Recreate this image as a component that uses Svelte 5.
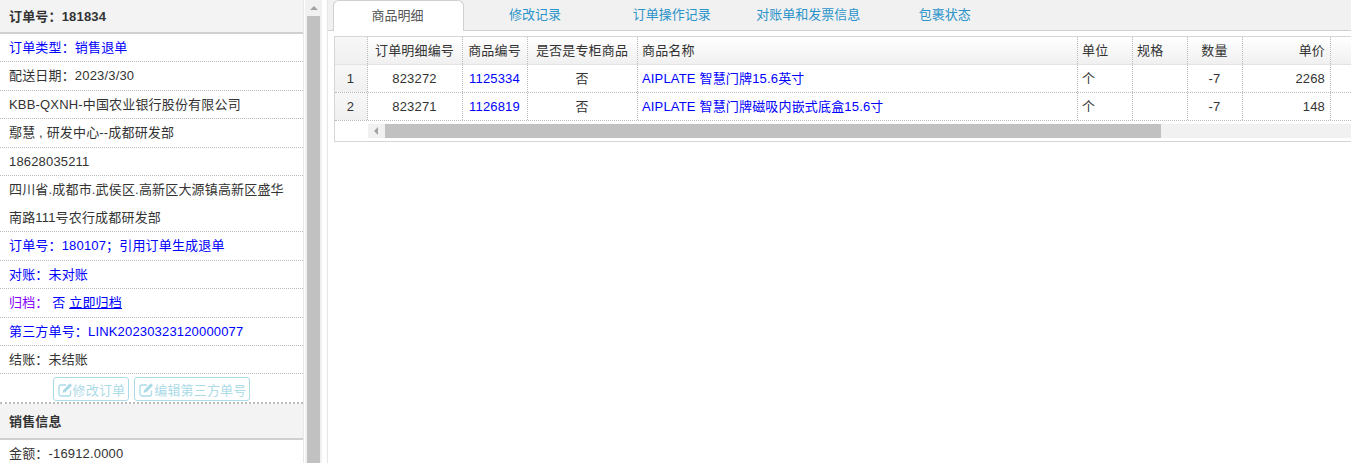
<script>
  // left panel rows
  const rows = [
    { text: "订单类型：销售退单", cls: "blue" },
    { text: "配送日期：2023/3/30" },
    { text: "KBB-QXNH-中国农业银行股份有限公司" },
    { text: "鄢慧 , 研发中心--成都研发部" },
    { text: "18628035211" },
    { text: "四川省.成都市.武侯区.高新区大源镇高新区盛华南路111号农行成都研发部" },
    { text: "订单号：180107；引用订单生成退单", cls: "blue" },
    { text: "对账：未对账", cls: "blue" },
    { text: "", cls: "purple", archive: true },
    { text: "第三方单号：LINK20230323120000077", cls: "blue" },
    { text: "结账：未结账" },
  ];

  const tabs = ["商品明细", "修改记录", "订单操作记录", "对账单和发票信息", "包裹状态"];

  const items = [
    { no: 1, id: "823272", code: "1125334", name: "AIPLATE 智慧门牌15.6英寸", qty: -7, price: 2268 },
    { no: 2, id: "823271", code: "1126819", name: "AIPLATE 智慧门牌磁吸内嵌式底盒15.6寸", qty: -7, price: 148 },
  ];
</script>

{#snippet editIcon()}
  <svg class="icon" viewBox="0 0 15 15" width="15" height="15" fill="none" stroke="currentColor">
    <path d="M12.500 8.500v3.500a2 2 0 0 1-2 2H3a2 2 0 0 1-2-2V5a2 2 0 0 1 2-2h5" stroke-width="1.300" />
    <path d="M4.500 10.800l.7-2.800L11.800 1.200l2.300 2.300-6.700 6.700z" fill="currentColor" stroke="none" />
  </svg>
{/snippet}

<div class="page">
  <aside class="left">
    <div class="panel">
      <div class="title first">订单号：181834</div>
      {#each rows as row}
        <div class="row {row.cls || ''}">
          {#if row.archive}
            归档：<span class="blue">&nbsp;否 <u>立即归档</u></span>
          {:else}
            {row.text}
          {/if}
        </div>
      {/each}
      <div class="actions">
        <button>{@render editIcon()}修改订单</button>
        <button>{@render editIcon()}编辑第三方单号</button>
      </div>
      <div class="title">销售信息</div>
      <div class="row">金额：-16912.0000</div>
    </div>
    <div class="vscroll">
      <span class="arrow-up"></span>
      <div class="vthumb"></div>
    </div>
  </aside>

  <main class="right">
    <div class="tabs">
      {#each tabs as tab, i}
        <div class="tab" class:active={i === 0}>{tab}</div>
      {/each}
    </div>
    <div class="grid">
      <div class="grid-row head">
        <div class="cell idx"></div>
        <div class="cell c-id center">订单明细编号</div>
        <div class="cell c-code center">商品编号</div>
        <div class="cell c-flag center">是否是专柜商品</div>
        <div class="cell c-name">商品名称</div>
        <div class="cell c-unit">单位</div>
        <div class="cell c-spec">规格</div>
        <div class="cell c-qty center">数量</div>
        <div class="cell c-price end">单价</div>
        <div class="cell c-rest"></div>
      </div>
      {#each items as item}
        <div class="grid-row">
          <div class="cell idx">{item.no}</div>
          <div class="cell c-id center">{item.id}</div>
          <div class="cell c-code center blue">{item.code}</div>
          <div class="cell c-flag center">否</div>
          <div class="cell c-name blue">{item.name}</div>
          <div class="cell c-unit">个</div>
          <div class="cell c-spec"></div>
          <div class="cell c-qty center">{item.qty}</div>
          <div class="cell c-price end">{item.price}</div>
          <div class="cell c-rest"></div>
        </div>
      {/each}
      <div class="hscroll">
        <span class="arrow-left"></span>
        <div class="hthumb"></div>
      </div>
    </div>
  </main>
</div>

<style>
  :global(body) {
    margin: 0;
    background: #fff;
  }

  .page {
    display: flex;
    width: 1351px;
    height: 463px;
    overflow: hidden;
    font-family: "Liberation Sans", "Noto Sans CJK SC", sans-serif;
    font-size: 13px;
    letter-spacing: 0.17px;
    color: #333;
  }

  .left {
    display: flex;
    flex: none;
    width: 328px;
    border-right: 1px solid #e6e6e6;
    box-sizing: border-box;
  }

  .panel {
    flex: none;
    width: 304px;
    border-right: 1px solid #e8e8e8;
    box-sizing: border-box;
  }

  .title {
    height: 36px;
    line-height: 36px;
    padding-left: 9px;
    background: #f3f3f3;
    border-bottom: 2px solid #d0d0d0;
    box-sizing: border-box;
    font-weight: bold;
  }
  .title.first {
    height: 34px;
    line-height: 33px;
  }

  .row {
    padding: 0 15px 0 9px;
    line-height: 27.45px;
    border-bottom: 1px dotted #bbb;
  }

  .blue {
    color: #00f;
  }
  .purple {
    color: #80f;
  }

  .actions {
    display: flex;
    justify-content: center;
    gap: 5px;
    height: 30px;
    padding-top: 3px;
    box-sizing: border-box;
    border-bottom: 2px dotted #bbb;
  }

  .actions button {
    display: flex;
    align-items: center;
    height: 24px;
    padding: 0 3px 0 4px;
    background: #fff;
    border: 1px solid #acdbe8;
    border-radius: 3px;
    font: inherit;
    letter-spacing: inherit;
    color: #acdbe8;
  }
  .icon {
    flex: none;
  }

  .vscroll {
    position: relative;
    flex: none;
    width: 17px;
    margin-left: 1px;
    background: #f1f1f1;
    padding-top: 16px;
    box-sizing: border-box;
  }
  .arrow-up {
    position: absolute;
    top: 6px;
    left: 5px;
    border: 4px solid transparent;
    border-top: 0;
    border-bottom: 4px solid #a3a3a3;
  }
  .vthumb {
    width: 13px;
    margin-left: 2px;
    height: 447px;
    background: #c1c1c1;
  }

  .right {
    flex: 1;
    min-width: 0;
  }

  .tabs {
    display: flex;
    gap: 5.6px;
    height: 31px;
    padding-left: 5px;
    background: #f1f1f1;
    border-bottom: 1px solid #d0d0d0;
    box-sizing: border-box;
  }
  .tab {
    flex: none;
    width: 131px;
    padding-top: 3px;
    line-height: 24px;
    letter-spacing: 0;
    text-align: center;
    color: #2a93c9;
    box-sizing: border-box;
  }
  .tab.active {
    height: 31px;
    padding-right: 2px;
    background: #fff;
    color: #555;
    border: 1px solid #d0d0d0;
    border-bottom: 0;
    border-radius: 6px 6px 0 0;
  }

  .grid {
    width: 1017px;
    height: 106px;
    margin: 5px 0 0 6px;
    border-top: 1px solid #d6d6d6;
    border-bottom: 1px solid #d6d6d6;
    border-left: 1px solid #d6d6d6;
    box-sizing: border-box;
  }

  .grid-row {
    display: flex;
    height: 28px;
    line-height: 28px;
    border-bottom: 1px dotted #bbb;
    box-sizing: border-box;
  }
  .head {
    background: linear-gradient(#fff, #f0f0f0);
    border-bottom: 1px solid #e3e3e3;
  }

  .cell {
    flex: none;
    box-sizing: border-box;
    padding: 0 5px 0 4px;
    border-right: 1px dotted #bbb;
    white-space: nowrap;
    overflow: hidden;
  }
  .center {
    text-align: center;
  }
  .end {
    text-align: right;
  }
  .idx {
    width: 33px;
    text-align: center;
    background: linear-gradient(#f7f7f7, #f0f0f0);
  }
  .c-id { width: 95px; }
  .c-code { width: 65px; }
  .c-flag { width: 110px; }
  .c-name { width: 440px; }
  .c-unit { width: 55px; }
  .c-spec { width: 55px; }
  .c-qty { width: 55px; }
  .c-price { width: 88px; }
  .c-rest { flex: 1; border-right: 0; }

  .hscroll {
    position: relative;
    height: 14px;
    margin: 3px 0 0 33px;
    padding-left: 17px;
    background: #f1f1f1;
  }
  .arrow-left {
    position: absolute;
    left: 6px;
    top: 3px;
    border: 4px solid transparent;
    border-left: 0;
    border-right: 4px solid #a3a3a3;
  }
  .hthumb {
    width: 776px;
    height: 14px;
    background: #c1c1c1;
  }
</style>
